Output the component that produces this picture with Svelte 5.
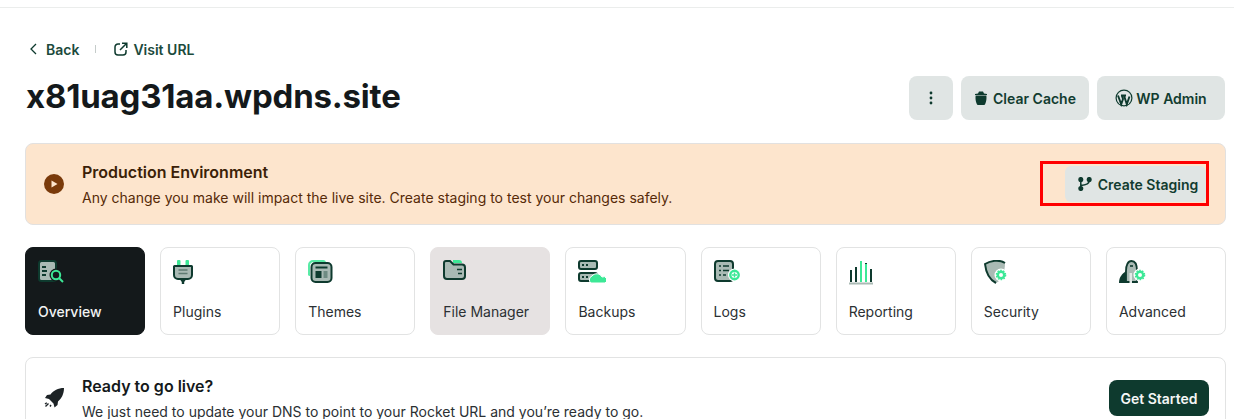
<script>
	const tabs = [
		{ id: 'overview', label: 'Overview', active: true },
		{ id: 'plugins', label: 'Plugins' },
		{ id: 'themes', label: 'Themes' },
		{ id: 'files', label: 'File Manager', hover: true },
		{ id: 'backups', label: 'Backups' },
		{ id: 'logs', label: 'Logs' },
		{ id: 'reporting', label: 'Reporting' },
		{ id: 'security', label: 'Security' },
		{ id: 'advanced', label: 'Advanced' }
	];
	const dark = '#0e3a2e';
	const mid = '#a9bab4';
	const green = '#3ce896';
</script>

{#snippet gear(x, y)}
	<circle cx={x} cy={y} r="6.5" fill="#fff" />
	<circle cx={x} cy={y} r="3.2" fill="none" stroke={green} stroke-width="2.4" />
	<circle cx={x} cy={y} r="4.6" fill="none" stroke={green} stroke-width="1.4" stroke-dasharray="1.6 1.3" />
{/snippet}

{#snippet tabIcon(id)}
	<svg class="tab-icon" width="28" height="26" viewBox="0 0 28 26">
		{#if id === 'overview'}
			<rect x="1" y="1" width="17" height="20" rx="2.5" fill={mid} stroke={dark} stroke-width="2" />
			<path d="M4 7h4M4 11h5M4 15h4" stroke={dark} stroke-width="2" />
			<circle cx="18" cy="15" r="6.5" fill="#14191b" />
			<circle cx="18" cy="15" r="4.2" fill="none" stroke={green} stroke-width="2" />
			<path d="M21 18l4 4" stroke={green} stroke-width="2" />
		{:else if id === 'plugins'}
			<rect x="4" y="0" width="3.5" height="6" rx="1" fill={green} />
			<rect x="12.5" y="0" width="3.5" height="6" rx="1" fill={green} />
			<path d="M1.5 6h17a.5.5 0 0 1 .5.5V15a4 4 0 0 1-4 4H5a4 4 0 0 1-4-4V6.500a.5.5 0 0 1 .5-.5z" fill={mid} stroke={dark} stroke-width="2" />
			<path d="M5.5 10h9M5.500 13.500h9" stroke="#5f7b72" stroke-width="1.6" />
			<path d="M7 19.5h6l-1.800 2.500v2h-2.400v-2z" fill={dark} />
		{:else if id === 'themes'}
			<path d="M0 15V5a5 5 0 0 1 5-5h10a3 3 0 0 1 3 2H6a4 4 0 0 0-4 4v10a2 2 0 0 1-2-1z" fill={green} opacity="0.85" />
			<rect x="3.5" y="3" width="20" height="19" rx="4" fill={mid} stroke={dark} stroke-width="2" />
			<path d="M7.5 7.500h12" stroke={dark} stroke-width="2" />
			<rect x="7.5" y="11" width="6" height="7" fill={dark} />
			<rect x="15.5" y="11" width="4" height="7" fill="#6e8b82" />
		{:else if id === 'files'}
			<path d="M10 0h6a3 3 0 0 1 3 3h-9z" fill={green} />
			<path d="M1 3a2 2 0 0 1 2-2h4l3.500 3.500H19a3 3 0 0 1 3 3V16a3 3 0 0 1-3 3H4a3 3 0 0 1-3-3z" fill={mid} stroke={dark} stroke-width="2" />
			<path d="M14 9.5h5M15 13.500h4" stroke={dark} stroke-width="1.7" />
		{:else if id === 'backups'}
			<rect x="1" y="1" width="18" height="8" rx="2" fill={mid} stroke={dark} stroke-width="2" />
			<rect x="1" y="13" width="18" height="8" rx="2" fill={mid} stroke={dark} stroke-width="2" />
			<path d="M4 5h2M8 5h2M4 17h2M8 17h2" stroke={dark} stroke-width="2" />
			<path d="M13 23a4 4 0 0 1 1-7 6 6 0 0 1 10 1 3 3 0 0 1 3 6z" fill={green} stroke="#fff" stroke-width="1" />
		{:else if id === 'logs'}
			<rect x="1" y="1" width="18" height="20" rx="3" fill={mid} stroke={dark} stroke-width="2" />
			<path d="M5 6h2M9 6h6M5 10.500h2M9 10.500h6M5 15h2M9 15h3" stroke={dark} stroke-width="1.7" />
			<circle cx="20.5" cy="15" r="6.5" fill="#fff" />
			<circle cx="20.5" cy="15" r="4.2" fill="none" stroke={green} stroke-width="2.4" />
			<path d="M20.5 12.500v5M18 15h5" stroke={green} stroke-width="1.4" />
		{:else if id === 'reporting'}
			<path d="M2 10v12M7 7v15M12 1v21M17 3v19M22 9v13" stroke={dark} stroke-width="2" />
			<path d="M12 1v21M17 4v18" stroke={green} stroke-width="2" />
			<rect x="0" y="22.5" width="24" height="2" fill={mid} />
		{:else if id === 'security'}
			<path d="M1 4c5-3 14-5 20-1 0 9-3 17-9 20C6 20 2 13 1 4z" fill={mid} />
			<path d="M12 23C6 20 2 13 1 4c5-3 14-5 20-1" fill="none" stroke={dark} stroke-width="2" />
			{@render gear(17, 15)}
		{:else if id === 'advanced'}
			<path d="M7 22V11C7 5 9 1 12.500 1S18 5 18 11v11z" fill={mid} stroke={dark} stroke-width="1.8" />
			<path d="M0 23c0-6 3-9 7-12v12z" fill={dark} />
			<path d="M10.5 23V13h2.500v10z" fill="#e4e9e7" />
			<path d="M11 6h3" stroke={dark} stroke-width="1.6" />
			{@render gear(21, 15)}
		{/if}
	</svg>
{/snippet}

<div class="page">
	<div class="crumbs">
		<span class="crumb">
			<svg width="16" height="16" viewBox="0 0 16 16" fill="none" stroke={dark} stroke-width="1.3"><path d="M10 3L5 8l5 5" /></svg>
			Back
		</span>
		<i class="sep"></i>
		<span class="crumb">
			<svg width="14" height="14" viewBox="0 0 14 14" fill="none" stroke={dark} stroke-width="1.5"><path d="M6 2H4a3 3 0 0 0-3 3v5a3 3 0 0 0 3 3h5a3 3 0 0 0 3-3V8" /><path d="M6 8l6.500-6.500M8 1.200h4.800V6" /></svg>
			Visit URL
		</span>
	</div>

	<header class="head">
		<h1>x81uag31aa.wpdns.site</h1>
		<div class="actions">
			<button class="btn more" aria-label="More">
				<svg width="4" height="14" viewBox="0 0 4 14" fill={dark}><circle cx="2" cy="2" r="1.4" /><circle cx="2" cy="7" r="1.4" /><circle cx="2" cy="12" r="1.4" /></svg>
			</button>
			<button class="btn wide cache">
				<svg width="12" height="14" viewBox="0 0 12 14" fill={dark}><path d="M0 3l3-.6L4 .6h4l1 1.800 3 .6v1H0z" /><path d="M.6 4.600h10.800c.3 3.500 0 6-1.200 8.400-.2.500-.6 1-1.200 1H3c-.6 0-1-.5-1.200-1C.6 10.600.3 8.100.6 4.600z" /></svg>
				Clear Cache
			</button>
			<button class="btn wide wp">
				<svg width="18" height="18" viewBox="0 0 18 18"><circle cx="9" cy="9" r="8.5" fill={dark} /><circle cx="9" cy="9" r="7.3" fill="#e0e5e4" /><path d="M3 6.500l3.200 8.800 1.800-5.300-1.200-3.500M6 6.500h5M9 6.500l2.800 8.800 2.700-7.800" stroke={dark} stroke-width="1.9" fill="none" /></svg>
				WP Admin
			</button>
		</div>
	</header>

	<section class="banner">
		<svg width="20" height="20" viewBox="0 0 20 20"><circle cx="10" cy="10" r="10" fill="#7a3a0a" /><path d="M7.500 6.500l6 3.500-6 3.500z" fill="#fde5cd" /></svg>
		<div class="banner-text">
			<h2>Production Environment</h2>
			<p>Any change you make will impact the live site. Create staging to test your changes safely.</p>
		</div>
		<div class="staging">
			<button class="btn small">
				<svg width="14" height="14" viewBox="0 0 14 14" fill="none" stroke={dark} stroke-width="1.5"><circle cx="2.800" cy="2.500" r="1.800" fill={dark} /><circle cx="2.800" cy="11.500" r="1.800" fill={dark} /><circle cx="11.200" cy="2.500" r="1.800" fill={dark} /><path d="M2.800 3v8M11.200 4c0 3-3 4-8.400 4.500" /></svg>
				Create Staging
			</button>
		</div>
	</section>

	<nav class="tabs">
		{#each tabs as tab}
			<div class="tab" class:active={tab.active} class:hover={tab.hover}>
				{@render tabIcon(tab.id)}
				<span>{tab.label}</span>
			</div>
		{/each}
	</nav>

	<section class="live">
		<svg width="20" height="20" viewBox="0 0 20 20" fill="#1d2326"><path d="M20 0C14 0 9.500 2.500 6.500 6.500L3 7 1 10l4 1 4.500 4.500 1 4 3-2.500.5-3.500C17.500 10.500 20 6 20 0z" /><path d="M1 16l1.800-1.300M4.500 15.500l-3 3M6 18.500l1-1.500" stroke="#1d2326" stroke-width="1.4" fill="none" /></svg>
		<div class="banner-text">
			<h2>Ready to go live?</h2>
			<p>We just need to update your DNS to point to your Rocket URL and you’re ready to go.</p>
		</div>
		<button class="btn start">Get Started</button>
	</section>
</div>

<style>
	:global(body) {
		overflow: hidden;
		background: #fff;
	}

	.page {
		height: 419px;
		box-sizing: border-box;
		overflow: hidden;
		padding: 0 8px 0 25px;
		font-family: Inter, 'Liberation Sans', sans-serif;
	}

	.page::before {
		content: '';
		display: block;
		height: 7px;
		margin: 0 -8px 0 -25px;
		border-bottom: 1px solid #ebedec;
	}

	.crumbs {
		display: flex;
		align-items: center;
		margin-top: 31px;
		height: 20px;
		padding-left: 1px;
		font-size: 14px;
		font-weight: 600;
		color: #1c4a3c;
	}

	.crumb {
		display: flex;
		align-items: center;
		gap: 4px;
	}

	.crumb + .sep + .crumb {
		gap: 5px;
	}

	.sep {
		width: 1px;
		height: 8px;
		background: #c5ccca;
		margin: 0 18px 0 16px;
	}

	.head {
		display: flex;
		align-items: center;
		justify-content: space-between;
		margin-top: 17px;
		padding-right: 1px;
	}

	h1 {
		margin: 0 0 4px;
		padding-left: 1px;
		font-size: 33px;
		line-height: 40px;
		font-weight: 700;
		letter-spacing: -0.2px;
		color: #14191b;
	}

	.actions {
		display: flex;
		gap: 8px;
	}

	.btn {
		display: inline-flex;
		align-items: center;
		justify-content: center;
		gap: 6px;
		border: 0;
		padding: 0;
		height: 44px;
		border-radius: 8px;
		background: #e0e5e4;
		color: #123c30;
		font: 600 14px Inter, 'Liberation Sans', sans-serif;
	}

	.more {
		width: 44px;
	}

	.wide {
		width: 128px;
	}

	.cache {
		padding-left: 1px;
	}

	.wp {
		gap: 3px;
	}

	.banner {
		display: flex;
		align-items: center;
		gap: 18px;
		height: 82px;
		box-sizing: border-box;
		margin-top: 23px;
		padding: 0 19px 0 18px;
		border: 1px solid #e2e1e0;
		border-radius: 8px;
		background: #fde5cd;
		color: #562a08;
	}

	.banner-text {
		flex: 1;
		padding-top: 2px;
	}

	h2 {
		margin: 0 0 6px;
		font-size: 16px;
		line-height: 20px;
		font-weight: 600;
		color: #3b1f08;
	}

	p {
		margin: 0;
		font-size: 14px;
		line-height: 20px;
	}

	.staging {
		position: relative;
		display: flex;
		justify-content: flex-end;
	}

	/* red annotation box from the screenshot */
	.staging::after {
		content: '';
		position: absolute;
		left: -25px;
		top: -5px;
		right: -3px;
		bottom: -4px;
		border: 3px solid #f00;
		pointer-events: none;
	}

	.small {
		width: 141px;
		height: 36px;
		padding-left: 5px;
		border-radius: 6px;
	}

	.tabs {
		display: grid;
		grid-template-columns: repeat(9, 1fr);
		gap: 15px;
		margin-top: 22px;
	}

	.tab {
		height: 88px;
		box-sizing: border-box;
		padding: 12px 12px 0;
		border: 1px solid #e2e3e3;
		border-radius: 8px;
		font-size: 14px;
		color: #2b3033;
	}

	.tab span {
		display: block;
		margin-top: 16px;
		line-height: 20px;
	}

	.tab-icon {
		display: block;
	}

	.tab.active {
		background: #14191b;
		border-color: #14191b;
		color: #f1f3f3;
		font-weight: 500;
	}

	.tab.hover {
		background: #e6e2e2;
		border-color: #e6e2e2;
	}

	.live {
		display: flex;
		align-items: center;
		gap: 18px;
		height: 82px;
		box-sizing: border-box;
		margin-top: 22px;
		padding: 0 16px 0 18px;
		border: 1px solid #e2e3e3;
		border-radius: 8px;
		color: #2b3033;
	}

	.live h2 {
		color: #14191b;
	}

	.start {
		width: 100px;
		height: 36px;
		background: #0e3a2e;
		color: #f4f6f5;
	}
</style>
